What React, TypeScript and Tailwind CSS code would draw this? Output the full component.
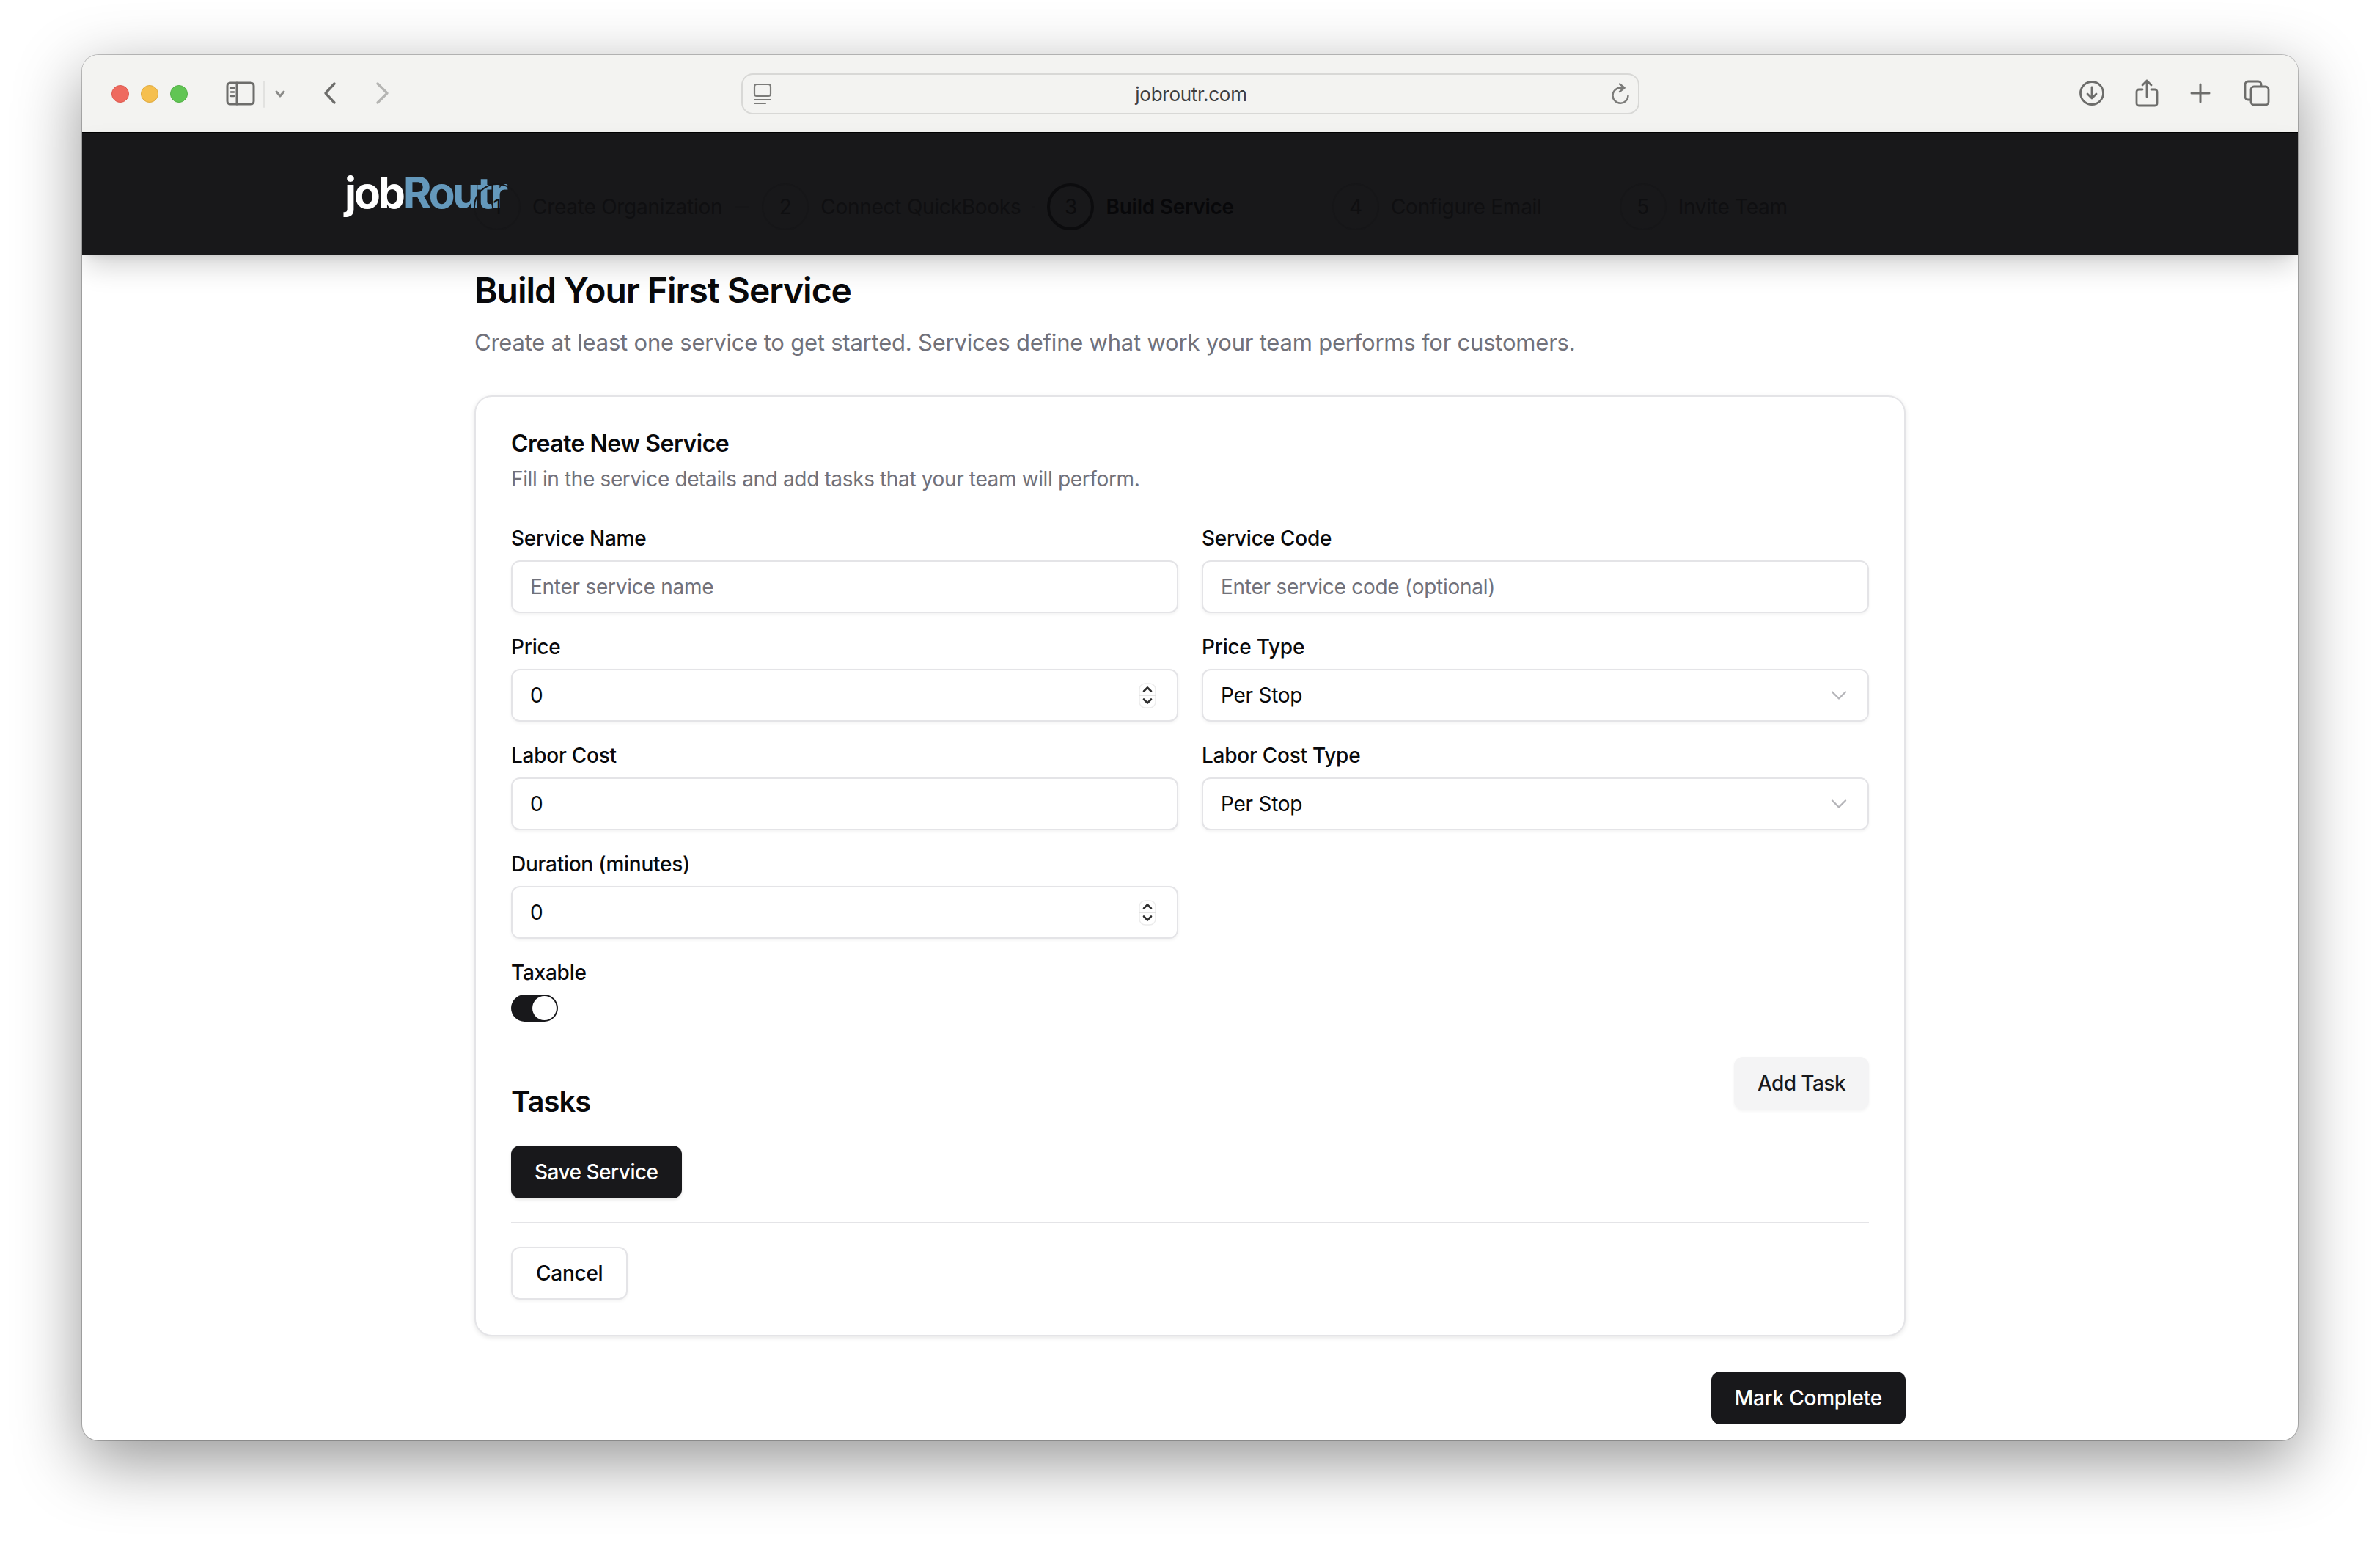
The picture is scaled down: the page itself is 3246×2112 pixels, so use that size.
import { ChevronDown } from 'lucide-react';

const font = { fontFamily: 'Inter, "Liberation Sans", sans-serif' };

function Spinner() {
  return (
    <svg width="24" height="35" viewBox="0 0 24 35" fill="none" strokeLinecap="round" strokeLinejoin="round">
      <rect x="1" y="1" width="22" height="33" rx="8" fill="#ffffff" stroke="#ececec" strokeWidth="1.500" />
      <path d="M1 17h22" stroke="#dcdcdc" strokeWidth="1.500" />
      <path d="M7 11.500 12 6.500 17 11.500" stroke="#2f2f2f" strokeWidth="2.600" />
      <path d="M7 22.500 12 27.500 17 22.500" stroke="#2f2f2f" strokeWidth="2.600" />
    </svg>
  );
}

function Field({ label, children }: { label: string; children: React.ReactNode }) {
  return (
    <div>
      <div className="text-[28px] leading-[28px] font-medium text-[#09090b] mb-[16px]">{label}</div>
      {children}
    </div>
  );
}

function Box({ children, muted = false }: { children?: React.ReactNode; muted?: boolean }) {
  return (
    <div className={`h-[72px] rounded-[12px] border-2 border-[#e4e4e7] bg-white shadow-[0_2px_4px_rgba(0,0,0,0.05)] pl-[24px] pr-[28px] flex items-center justify-between text-[28px] ${muted ? 'text-[#71717a]' : 'text-[#09090b]'}`}>
      {children}
    </div>
  );
}

function SelectBox({ value }: { value: string }) {
  return (
    <Box>
      <span>{value}</span>
      <ChevronDown size={36} strokeWidth={1.600} className="text-[#b4b4b8] -mr-[7px]" />
    </Box>
  );
}

function Step({ n, label, active = false }: { n: number; label: string; active?: boolean }) {
  return (
    <div className="flex items-center gap-[16px]">
      <div
        className={`w-[64px] h-[64px] rounded-full flex items-center justify-center text-[28px] ${
          active ? 'border-[4px] border-[#0c0c0e] text-[#0c0c0e]' : 'border-2 border-[#161618] text-[#0f0f11]'
        }`}
      >
        {n}
      </div>
      <span className={`text-[28px] whitespace-nowrap ${active ? 'font-semibold text-[#08080a]' : 'text-[#0f0f11]'}`}>{label}</span>
    </div>
  );
}

function BrowserBar() {
  return (
    <div className="h-[105px] bg-[#f3f3f1] flex items-start shrink-0 relative">
      <div className="flex gap-[16px] ml-[40px] mt-[41px]">
        <div className="w-[24px] h-[24px] rounded-full bg-[#ee6a5f] border border-[#dd5a50]" />
        <div className="w-[24px] h-[24px] rounded-full bg-[#f5bf4f] border border-[#dea93f]" />
        <div className="w-[24px] h-[24px] rounded-full bg-[#61c554] border border-[#54b048]" />
      </div>
      <svg className="ml-[52px] mt-[35px]" width="96" height="40" viewBox="0 0 96 40" fill="none" stroke="#6d6d6b" strokeWidth="3" strokeLinecap="round" strokeLinejoin="round">
        <rect x="2" y="3" width="36" height="29" rx="4" />
        <path d="M15 3v29" />
        <path d="M7 10h4M7 15.500h4M7 21h4" strokeWidth="2.400" />
        <path d="M52 0v36" stroke="#e2e2e0" strokeWidth="2" />
        <path d="M69 15l5 6 5-6" stroke="#8a8a88" />
      </svg>
      <svg className="ml-[37px] mt-[36px]" width="100" height="32" viewBox="0 0 100 32" fill="none" strokeWidth="3.400" strokeLinecap="round" strokeLinejoin="round">
        <path d="M15 3 3 16l12 13" stroke="#6d6d6b" />
        <path d="M74 3l13 13-13 13" stroke="#b5b5b3" />
      </svg>
      <div className="absolute left-[899px] top-[25px] w-[1225px] h-[56px] rounded-[16px] border-2 border-[#d8d8d6] flex items-center justify-between pl-[14px] pr-[10px]">
        <svg width="26" height="30" viewBox="0 0 26 30" fill="none" stroke="#7b7b79" strokeWidth="2.200" strokeLinecap="round">
          <rect x="2" y="2" width="22" height="16" rx="3" />
          <path d="M2 23h22" />
          <path d="M2 28h15" />
        </svg>
        <span className="text-[26px] text-[#3f3f3f] font-normal">jobroutr.com</span>
        <svg width="28" height="30" viewBox="0 0 28 30" fill="none" stroke="#7b7b79" strokeWidth="2.400" strokeLinecap="round" strokeLinejoin="round">
          <path d="M24.500 17A10.500 10.500 0 1 1 14 6.700H19" />
          <path d="M13 1.500 19.600 6.700 13 12" />
        </svg>
      </div>
      <div className="absolute right-[38px] top-[33px] flex items-center">
        <svg width="36" height="36" viewBox="0 0 36 36" fill="none" stroke="#6d6d6b" strokeWidth="2.800" strokeLinecap="round" strokeLinejoin="round">
          <circle cx="18" cy="18" r="15.500" />
          <path d="M18 10v15M12 19l6 6 6-6" />
        </svg>
        <svg className="ml-[41px]" width="32" height="38" viewBox="0 0 32 38" fill="none" stroke="#6d6d6b" strokeWidth="2.800" strokeLinecap="round" strokeLinejoin="round">
          <path d="M10 14H5a3 3 0 0 0-3 3v16a3 3 0 0 0 3 3h22a3 3 0 0 0 3-3V17a3 3 0 0 0-3-3h-5" />
          <path d="M16 24V2M10 8l6-6 6 6" />
        </svg>
        <svg className="ml-[43px]" width="28" height="28" viewBox="0 0 28 28" fill="none" stroke="#6d6d6b" strokeWidth="3" strokeLinecap="round">
          <path d="M14 2v24M2 14h24" />
        </svg>
        <svg className="ml-[45px]" width="36" height="36" viewBox="0 0 36 36" fill="none" stroke="#6d6d6b" strokeWidth="2.800" strokeLinejoin="round">
          <path d="M9 27H6a4 4 0 0 1-4-4V6a4 4 0 0 1 4-4h14a4 4 0 0 1 4 4v3" />
          <rect x="10" y="9" width="24" height="25" rx="4" />
        </svg>
      </div>
    </div>
  );
}

function AppHeader() {
  return (
    <div className="h-[168px] bg-[#18181a] border-t-2 border-[#000000] shrink-0 flex items-start relative z-10 shadow-[0_20px_36px_-6px_rgba(0,0,0,0.18),0_8px_12px_-8px_rgba(0,0,0,0.12)]">
      <div className="ml-[358px] w-[221px] mt-[46px] text-[59px] leading-[70px] font-bold tracking-[-0.055em] whitespace-nowrap">
        <span className="text-white">job</span>
        <span className="text-[#6498bb]">Routr</span>
      </div>
      <div className="ml-[-45px] mt-[68px] flex items-center">
        <Step n={1} label="Create Organization" />
        <div className="w-[18px] h-[2px] bg-[#161618] mx-[18px]" />
        <Step n={2} label="Connect QuickBooks" />
        <div className="w-[4px] h-[2px] bg-[#161618] mx-[16px]" />
        <Step n={3} label="Build Service" active />
        <div className="w-[134px]" />
        <Step n={4} label="Configure Email" />
        <div className="w-[106px]" />
        <Step n={5} label="Invite Team" />
      </div>
    </div>
  );
}

export default function App() {
  return (
    <div className="w-[3246px] h-[2112px] bg-white overflow-hidden pt-[75px] pl-[112px] tracking-[-0.016em]" style={font}>
      <div className="w-[3022px] h-[1889px] rounded-[22px] bg-white overflow-hidden flex flex-col shadow-[0_28px_90px_rgba(0,0,0,0.42),0_0_0_1px_rgba(0,0,0,0.22)]">
        <BrowserBar />
        <AppHeader />
        <div className="w-[1952px] ml-[535px]">
          <h1 className="mt-[20px] text-[48px] leading-[56px] font-semibold tracking-[-0.022em] text-[#09090b]">Build Your First Service</h1>
          <p className="mt-[19px] text-[31px] leading-[48px] tracking-[-0.007em] text-[#71717a]">
            Create at least one service to get started. Services define what work your team performs for customers.
          </p>
          <div className="mt-[48px] rounded-[24px] border-2 border-[#e4e4e7] bg-white shadow-[0_2px_6px_rgba(0,0,0,0.1)] p-[48px]">
            <div className="text-[32px] leading-[36px] font-semibold tracking-[-0.016em] text-[#09090b] mt-[-2px]">Create New Service</div>
            <div className="text-[28px] leading-[40px] tracking-[-0.013em] text-[#71717a] mt-[10px]">Fill in the service details and add tasks that your team will perform.</div>

            <div className="grid grid-cols-2 gap-x-[32px] gap-y-[32px] mt-[47px]">
              <Field label="Service Name"><Box muted>Enter service name</Box></Field>
              <Field label="Service Code"><Box muted>Enter service code (optional)</Box></Field>
              <Field label="Price"><Box><span>0</span><Spinner /></Box></Field>
              <Field label="Price Type"><SelectBox value="Per Stop" /></Field>
              <Field label="Labor Cost"><Box><span>0</span></Box></Field>
              <Field label="Labor Cost Type"><SelectBox value="Per Stop" /></Field>
              <Field label="Duration (minutes)"><Box><span>0</span><Spinner /></Box></Field>
              <div />
            </div>

            <div className="mt-[32px] text-[28px] leading-[28px] font-medium text-[#09090b]">Taxable</div>
            <div className="mt-[16px] w-[64px] h-[37px] rounded-full bg-[#18181b] flex items-center justify-end pr-[2px]">
              <div className="w-[33px] h-[33px] rounded-full bg-white" />
            </div>

            <div className="flex items-start justify-between mt-[48px]">
              <h2 className="text-[40px] leading-[48px] font-semibold tracking-[-0.025em] text-[#09090b] mt-[37px]">Tasks</h2>
              <button className="h-[72px] px-[32px] rounded-[12px] bg-[#f4f4f5] text-[28px] font-medium tracking-[-0.02em] text-[#18181b] shadow-[0_2px_4px_rgba(0,0,0,0.05)]">Add Task</button>
            </div>
            <button className="mt-[36px] h-[72px] px-[32px] rounded-[12px] bg-[#18181b] text-[28px] font-medium tracking-[-0.018em] text-white shadow-[0_2px_4px_rgba(0,0,0,0.1)]">Save Service</button>
            <div className="mt-[32px] h-[2px] bg-[#e4e4e7]" />
            <button className="mt-[32px] h-[72px] px-[32px] rounded-[12px] border-2 border-[#e4e4e7] bg-white text-[28px] font-medium text-[#09090b] shadow-[0_2px_4px_rgba(0,0,0,0.05)]">Cancel</button>
          </div>
          <div className="flex justify-end mt-[48px]">
            <button className="h-[72px] px-[32px] rounded-[12px] bg-[#18181b] text-[28px] font-medium text-white">Mark Complete</button>
          </div>
        </div>
      </div>
    </div>
  );
}
